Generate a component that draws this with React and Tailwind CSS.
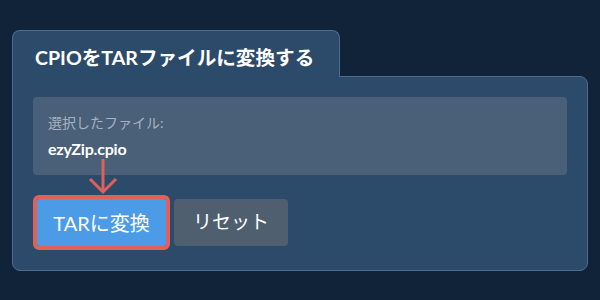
export default function App() {
  return (
    <div
      className="w-[600px] h-[300px] bg-[#112338] pt-[30px] px-3"
      style={{ fontFamily: 'Lato, "Noto Sans CJK JP", sans-serif' }}
    >
      <div className="flex flex-col w-[576px]">
        <div className="relative z-10 -mb-px w-[328px] h-[47px] bg-[#2c4a6a] border-l border-t border-r border-[#4f6b8c] rounded-t-lg flex items-center pl-[22px]">
          <span className="text-white text-[19.6px] font-bold leading-none pt-[7px]">
            CPIOをTARファイルに変換する
          </span>
        </div>
        <div className="relative bg-[#2c4a6a] border border-[#4f6b8c] rounded-b-lg rounded-tr-lg p-5">
          <div className="bg-[#4a5f78] rounded-[4px] pl-[15px] pt-4 pb-[14px] flex flex-col gap-1">
            <span className="text-[#a7b2c0] text-[14px] leading-5">選択したファイル:</span>
            <span className="text-white text-[16px] font-bold leading-6 tracking-[-0.2px]">ezyZip.cpio</span>
          </div>
          <div className="mt-5 flex items-center gap-1">
            <div className="border-4 border-[#e0605a] rounded-[6px]">
              <button className="w-[129px] h-[47px] bg-[#4b9be6] text-white text-[20px] rounded-[2px]">
                TARに変換
              </button>
            </div>
            <button className="w-[114px] h-[47px] bg-[#4f5f70] text-white text-[19px] rounded-[4px]">
              リセット
            </button>
          </div>
          <svg
            className="absolute left-[75px] top-[82px]"
            width="30"
            height="36"
            viewBox="0 0 30 36"
            fill="none"
            stroke="#e0605a"
            strokeWidth="3"
          >
            <line x1="15" y1="0" x2="15" y2="33" />
            <polyline points="2,20 15,33 28,20" />
          </svg>
        </div>
      </div>
    </div>
  );
}
